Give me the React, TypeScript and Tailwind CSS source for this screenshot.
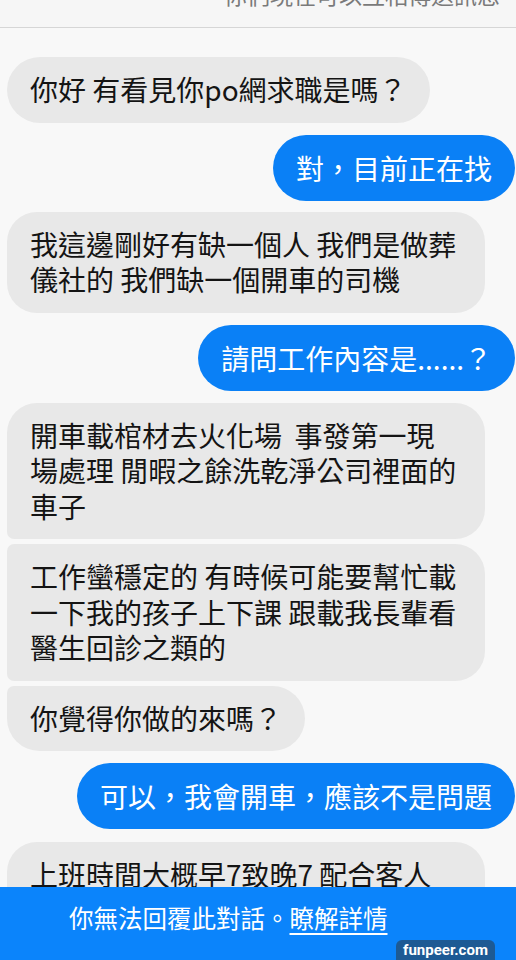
import React from "react";

type Msg = {
  from: "them" | "me";
  lines: string[];
  corner?: string;
  wide?: boolean;
  gap: string;
};

const messages: Msg[] = [
  { from: "them", lines: ["你好 有看見你po網求職是嗎？"], gap: "mt-[29px]", corner: "rounded-[33px]" },
  { from: "me", lines: ["對，目前正在找"], gap: "mt-[12px]" },
  {
    from: "them",
    lines: ["我這邊剛好有缺一個人 我們是做葬", "儀社的 我們缺一個開車的司機"],
    wide: true,
    gap: "mt-[11px]",
    corner: "rounded-[30px]",
  },
  { from: "me", lines: ["請問工作內容是......？"], gap: "mt-[12px]" },
  {
    from: "them",
    lines: ["開車載棺材去火化場  事發第一現", "場處理 閒暇之餘洗乾淨公司裡面的", "車子"],
    wide: true,
    gap: "mt-[12px]",
    corner: "rounded-[30px] rounded-bl-[7px]",
  },
  {
    from: "them",
    lines: ["工作蠻穩定的 有時候可能要幫忙載", "一下我的孩子上下課 跟載我長輩看", "醫生回診之類的"],
    wide: true,
    gap: "mt-[5px]",
    corner: "rounded-[30px] rounded-tl-[7px] rounded-bl-[7px]",
  },
  {
    from: "them",
    lines: ["你覺得你做的來嗎？"],
    gap: "mt-[5px]",
    corner: "rounded-[33px] rounded-tl-[7px]",
  },
  { from: "me", lines: ["可以，我會開車，應該不是問題"], gap: "mt-[12px]" },
  {
    from: "them",
    lines: ["上班時間大概早7致晚7 配合客人", "的時間"],
    wide: true,
    gap: "mt-[13px]",
    corner: "rounded-[30px]",
  },
];

const Bubble = ({ m }: { m: Msg }) => {
  if (m.from === "me") {
    return (
      <div className={`${m.gap} flex justify-end pr-[1px]`}>
        <div className="rounded-[34px] bg-[#0a80f6] px-[23px] py-[15px] text-[28px] leading-[36px] text-white whitespace-pre">
          {m.lines[0]}
        </div>
      </div>
    );
  }
  return (
    <div className={`${m.gap} flex justify-start pl-[7px]`}>
      <div
        className={`${m.corner} ${m.wide ? "w-[478px]" : ""} bg-[#e8e8e8] px-[23px] py-[15px] text-[28px] leading-[35.5px] text-[#141414]`}
      >
        {m.lines.map((l, i) => (
          <div key={i} className="whitespace-pre">
            {l}
          </div>
        ))}
      </div>
    </div>
  );
};

export default function App() {
  return (
    <div
      className="flex h-[960px] w-[516px] flex-col overflow-hidden bg-[#f8f8f8]"
      style={{ fontFamily: '"Noto Sans CJK TC", "Noto Sans", sans-serif' }}
    >
      <div className="h-[28px] shrink-0 overflow-hidden border-b border-[#d6d6d6] bg-[#f6f6f6]">
        <div className="-mt-[20px] pl-[224px] text-[23px] leading-[28px] text-[#7a7a7a] whitespace-nowrap">
          你們現在可以互相傳送訊息
        </div>
      </div>

      <div className="flex-1 overflow-hidden">
        {messages.map((m, i) => (
          <Bubble key={i} m={m} />
        ))}
      </div>

      <div className="relative h-[73px] shrink-0 bg-[#0b84fb]">
        <div className="pl-[69px] pt-[16px] text-[24.5px] leading-[30px] text-white">
          你無法回覆此對話。<span className="underline underline-offset-[5px] decoration-[1.5px]">瞭解詳情</span>
        </div>
        <div
          className="absolute bottom-0 left-[396px] w-[99px] rounded-t-[6px] bg-[#1d5a94] pt-[1px] text-center text-[15px] font-bold leading-[19px] text-white"
          style={{ fontFamily: "Roboto, 'Liberation Sans', sans-serif" }}
        >
          funpeer.com
        </div>
      </div>
    </div>
  );
}
